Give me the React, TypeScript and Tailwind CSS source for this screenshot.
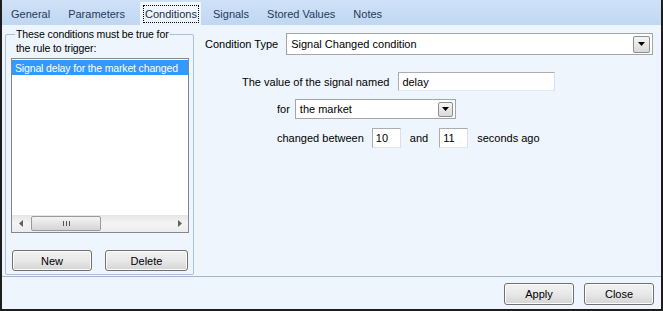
import React from 'react';

// --- small win7-ish controls ---

const DownArrow = () => (
  <svg width="7" height="4" viewBox="0 0 7 4">
    <path d="M0 0 H7 L3.5 4 Z" fill="#000" />
  </svg>
);

const DropButton = ({ size }: { size: 'lg' | 'sm' }) => (
  <div
    className={`${size === 'lg' ? 'w-[17px] h-[17px] mr-[2px]' : 'w-[15px] h-[15px] mr-[2px]'} flex items-center justify-center border border-[#8c8e90] rounded-[2px] bg-gradient-to-b from-[#f5f5f5] to-[#d9d9d9]`}
  >
    <DownArrow />
  </div>
);

const Combo = ({ value, className, size }: { value: string; className: string; size: 'lg' | 'sm' }) => (
  <div className={`${className} flex items-center border border-[#a3a5a8] bg-white`}>
    <span className="flex-1 pl-[4px] truncate">{value}</span>
    <DropButton size={size} />
  </div>
);

const TextBox = ({ value, className }: { value: string; className: string }) => (
  <div className={`${className} flex items-center border border-[#abadb3] border-b-[#e3e9ef] border-r-[#dbdfe6] bg-white pl-[3px]`}>
    {value}
  </div>
);

const Button = ({ label, className }: { label: string; className: string }) => (
  <div
    className={`${className} flex items-center justify-center rounded-[3px] border border-[#707070] bg-gradient-to-b from-[#f2f2f2] via-[#e8e8e8] to-[#d4d4d4] shadow-[inset_0_0_0_1px_#fcfcfc]`}
  >
    {label}
  </div>
);

const Tabs = () => {
  const before = ['General', 'Parameters'];
  const after = ['Signals', 'Stored Values', 'Notes'];
  return (
    <div className="h-[25px] flex items-end bg-gradient-to-b from-[#cfe1f7] to-[#c0d7f2] text-[#1f3a5c]">
      {before.map((t) => (
        <div key={t} className="h-[23px] px-[9px] flex items-center">{t}</div>
      ))}
      <div className="h-[23px] ml-[6px] mr-[3px] pl-[3px] pr-[2px] flex items-center bg-gradient-to-b from-[#f3f8fe] to-[#eaf2fc]">
        <div className="px-[1px] h-[18px] flex items-center border border-dotted border-[#000] text-[#1b2f48]">Conditions</div>
      </div>
      {after.map((t) => (
        <div key={t} className="h-[23px] px-[9px] flex items-center">{t}</div>
      ))}
    </div>
  );
};

const ScrollArrow = ({ dir }: { dir: 'l' | 'r' }) => (
  <div className="w-[17px] h-full flex items-center justify-center">
    <svg width="4" height="7" viewBox="0 0 4 7">
      <path d={dir === 'l' ? 'M4 0 V7 L0 3.5 Z' : 'M0 0 V7 L4 3.5 Z'} fill="#606060" />
    </svg>
  </div>
);

const HScroll = () => (
  <div className="h-[17px] flex items-center bg-gradient-to-b from-[#e6e6e6] via-[#f4f4f4] to-[#ececec]">
    <ScrollArrow dir="l" />
    <div className="flex-1 h-full flex items-center pl-[2px]">
      <div className="w-[70px] h-[15px] flex items-center justify-center gap-[2px] rounded-[2px] border border-[#9a9a9a] bg-gradient-to-b from-[#f4f4f4] to-[#d5d5d5]">
        <span className="w-[1px] h-[5px] bg-[#555]" />
        <span className="w-[1px] h-[5px] bg-[#555]" />
        <span className="w-[1px] h-[5px] bg-[#555]" />
      </div>
    </div>
    <ScrollArrow dir="r" />
  </div>
);

export default function App() {
  return (
    <div className="w-[663px] h-[311px] flex flex-col overflow-hidden bg-[#eef5fc] border-x-2 border-b-2 border-[#1d1d1d] text-[11px] leading-[14px] text-black font-['Liberation_Sans',Arial,sans-serif]">
      <Tabs />

      <div className="h-[252px] flex border-b border-[#a3b6cc]">
        {/* rule conditions group */}
        <div className="ml-[3px] mt-[9px] w-[189px] h-[241px] flex flex-col border border-[#a9c0da] rounded-[2px]">
          <div className="-mt-[8px] ml-[9px] w-fit px-[1px] bg-[#eef5fc] text-[10.5px] tracking-[-0.1px]">
            These conditions must be true for
            <br />
            the rule to trigger:
          </div>
          <div className="ml-[5px] mt-[3px] w-[178px] h-[175px] flex flex-col border border-[#828790] bg-white">
            <div className="mt-[1px] h-[15px] flex items-center pl-[3px] bg-[#3399ff] text-white text-[10.5px] tracking-[-0.15px] whitespace-nowrap overflow-hidden">
              Signal delay for the market changed
            </div>
            <div className="flex-1" />
            <HScroll />
          </div>
          <div className="mt-[17px] ml-[6px] flex gap-[13px]">
            <Button label="New" className="w-[80px] h-[21px]" />
            <Button label="Delete" className="w-[83px] h-[21px]" />
          </div>
        </div>

        {/* condition editor */}
        <div className="flex-1 pl-[11px] pt-[8px] flex flex-col">
          <div className="h-[22px] flex items-center">
            <span>Condition Type</span>
            <Combo value="Signal Changed condition" className="ml-[8px] w-[367px] h-[22px]" size="lg" />
          </div>
          <div className="mt-[17px] pl-[37px] h-[19px] flex items-center">
            <span>The value of the signal named</span>
            <TextBox value="delay" className="ml-[9px] w-[157px] h-[19px]" />
          </div>
          <div className="mt-[8px] pl-[72px] h-[20px] flex items-center">
            <span>for</span>
            <Combo value="the market" className="ml-[5px] w-[161px] h-[20px]" size="sm" />
          </div>
          <div className="mt-[9px] pl-[72px] h-[20px] flex items-center">
            <span>changed between</span>
            <TextBox value="10" className="ml-[8px] w-[29px] h-[20px]" />
            <span className="ml-[9px]">and</span>
            <TextBox value="11" className="ml-[11px] w-[29px] h-[20px]" />
            <span className="ml-[9px]">seconds ago</span>
          </div>
        </div>
      </div>

      <div className="flex-1 flex justify-end items-start pt-[6px] pr-[7px] gap-[10px]">
        <Button label="Apply" className="w-[70px] h-[22px]" />
        <Button label="Close" className="w-[70px] h-[22px]" />
      </div>
    </div>
  );
}
